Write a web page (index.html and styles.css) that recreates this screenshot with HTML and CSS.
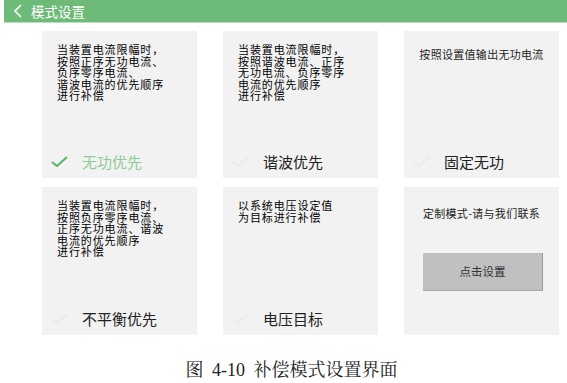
FILE: index.html
```html
<!DOCTYPE html>
<html lang="zh-CN">
<head>
  <meta charset="UTF-8">
  <title>模式设置</title>
  <link rel="stylesheet" href="styles.css">
</head>
<body>

  <div class="topbar">
    <svg class="back" viewBox="0 0 8 14"><path d="M7 1 L1 7 L7 13"/></svg>
    <span class="title">模式设置</span>
  </div>

  <div class="modes">
    <div class="card">
      <p class="desc">当装置电流限幅时，<br>按照正序无功电流、<br>负序零序电流、<br>谐波电流的优先顺序<br>进行补偿</p>
      <div class="label active">
        <svg class="tick" viewBox="0 0 17 11"><path d="M1 6 L6 10 L16 1"/></svg>
        <span>无功优先</span>
      </div>
    </div>

    <div class="card">
      <p class="desc">当装置电流限幅时，<br>按照谐波电流、正序<br>无功电流、负序零序<br>电流的优先顺序<br>进行补偿</p>
      <div class="label">
        <svg class="tick" viewBox="0 0 17 11"><path d="M1 6 L6 10 L16 1"/></svg>
        <span>谐波优先</span>
      </div>
    </div>

    <div class="card">
      <p class="desc single">按照设置值输出无功电流</p>
      <div class="label">
        <svg class="tick" viewBox="0 0 17 11"><path d="M1 6 L6 10 L16 1"/></svg>
        <span>固定无功</span>
      </div>
    </div>

    <div class="card">
      <p class="desc">当装置电流限幅时，<br>按照负序零序电流、<br>正序无功电流、谐波<br>电流的优先顺序<br>进行补偿</p>
      <div class="label">
        <svg class="tick" viewBox="0 0 17 11"><path d="M1 6 L6 10 L16 1"/></svg>
        <span>不平衡优先</span>
      </div>
    </div>

    <div class="card">
      <p class="desc">以系统电压设定值<br>为目标进行补偿</p>
      <div class="label">
        <svg class="tick" viewBox="0 0 17 11"><path d="M1 6 L6 10 L16 1"/></svg>
        <span>电压目标</span>
      </div>
    </div>

    <div class="card">
      <p class="desc single custom">定制模式-请与我们联系</p>
      <button class="set-btn">点击设置</button>
    </div>
  </div>

  <p class="caption">图 4-10 补偿模式设置界面</p>

</body>
</html>
```

FILE: styles.css
```css
body {
  margin: 0;
  background: #fff;
  font-family: "Noto Sans CJK SC", "Liberation Sans", sans-serif;
  color: #111;
}

.topbar {
  margin-left: 4px;
  height: 22px;
  background: #6dba79;
  border-bottom: 1px solid #b9dfbf;
  display: flex;
  align-items: center;
  color: #fff;
}

.back {
  width: 8px;
  height: 14px;
  margin: 0 9px 0 10px;
  fill: none;
  stroke: #fff;
  stroke-width: 1.6;
}

.title {
  font-size: 13.5px;
  line-height: 22px;
}

.modes {
  display: grid;
  grid-template-columns: 155px 155px 155px;
  grid-template-rows: 147px 148px;
  column-gap: 26px;
  row-gap: 9px;
  padding: 8px 0 0 42px;
}

.card {
  background: #f2f2f2;
  display: flex;
  flex-direction: column;
  padding: 13px 0 0 15px;
}

.desc {
  margin: 0;
  font-size: 11px;
  line-height: 11.5px;
  letter-spacing: 0.9px;
  color: #000;
}

.desc.single {
  margin-top: 5px;
  font-size: 11px;
  text-align: center;
  padding-right: 15px;
  letter-spacing: 0.3px;
  color: #222;
}

.desc.custom {
  margin-top: 8px;
}

.label {
  margin-top: auto;
  margin-bottom: 8px;
  display: flex;
  align-items: center;
  height: 18px;
  margin-left: -6px;
  font-size: 15px;
  color: #222;
}

.tick {
  width: 17px;
  height: 11px;
  margin-right: 14px;
  fill: none;
  stroke: #ebebeb;
  stroke-width: 2.2;
}

.label.active {
  color: #8dcc98;
}

.label.active .tick {
  stroke: #5cb96b;
}

.set-btn {
  margin: 33px 0 0 4px;
  width: 120px;
  height: 38px;
  background: #c0c0c0;
  border: none;
  border-right: 1px solid #9a9a9a;
  border-bottom: 1px solid #a8a8a8;
  font-family: "Noto Sans CJK SC", sans-serif;
  font-size: 11.5px;
  color: #333;
}

.caption {
  margin: 20px 0 0 16px;
  text-align: center;
  font-family: "Liberation Serif", "Noto Serif CJK SC", "Noto Sans CJK SC", serif;
  font-size: 18px;
  word-spacing: 4px;
  color: #222;
}
```
